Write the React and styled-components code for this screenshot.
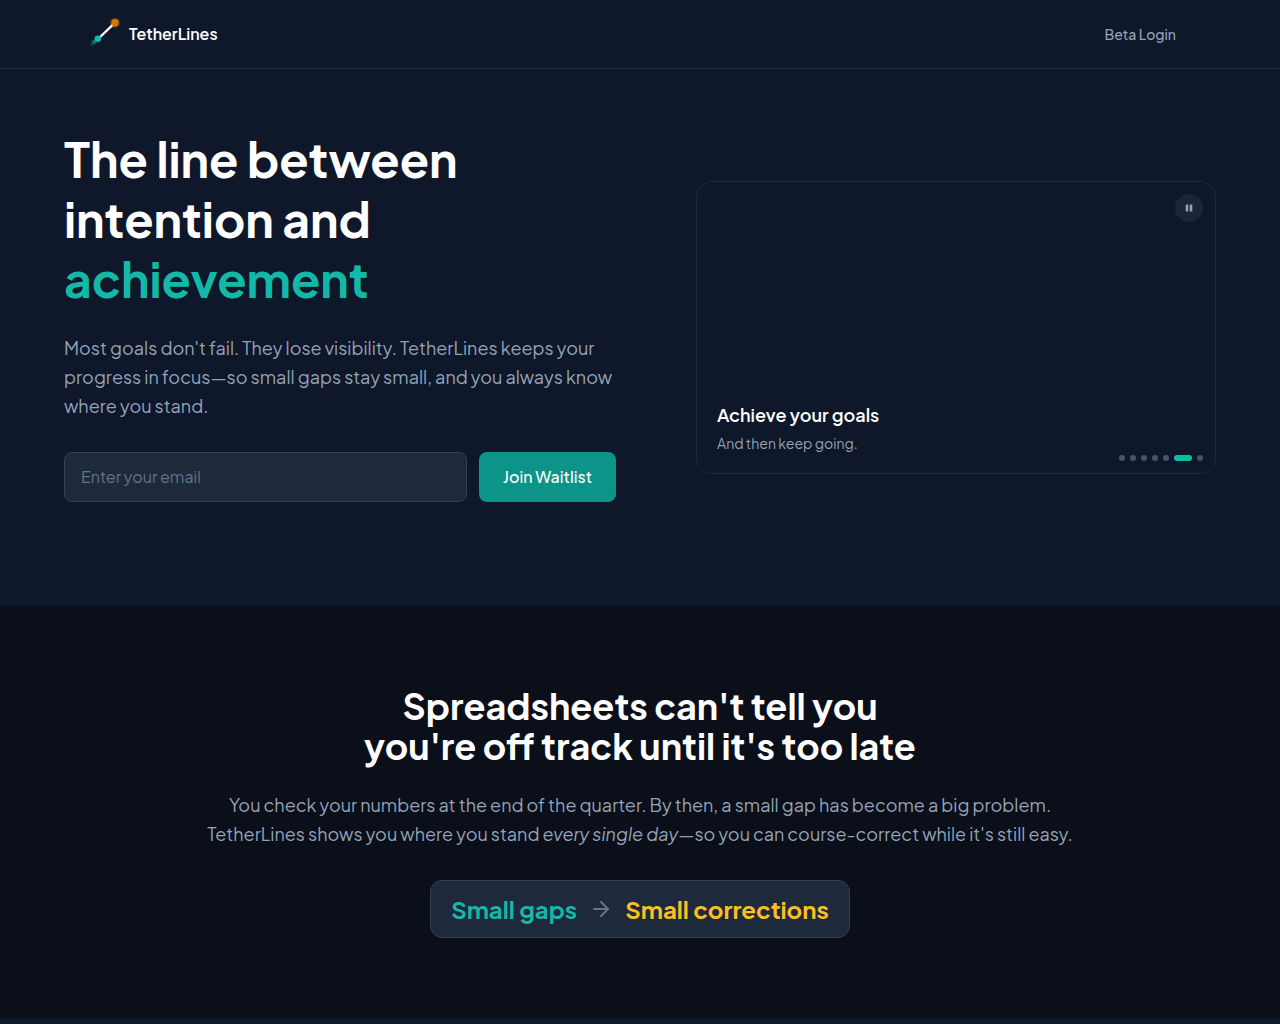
import React from 'react';
import styled, { createGlobalStyle } from 'styled-components';
import { ArrowRight } from 'lucide-react';

const GlobalStyle = createGlobalStyle`
  * {
    box-sizing: border-box;
  }

  body {
    margin: 0;
    background: #0f172a;
    color: #ffffff;
    font-family: 'Plus Jakarta Sans', 'Inter', sans-serif;
    -webkit-font-smoothing: antialiased;
  }

  h1, h2, h3, p {
    margin: 0;
  }

  button, input {
    font-family: inherit;
  }
`;

const Header = styled.header`
  border-bottom: 1px solid #1e293b;
`;

const Nav = styled.nav`
  display: flex;
  align-items: center;
  justify-content: space-between;
  max-width: 1152px;
  margin: 0 auto;
  padding: 16px 24px;
`;

const Brand = styled.a`
  display: flex;
  align-items: center;
  gap: 5px;
  color: #ffffff;
  font-size: 16px;
  font-weight: 600;
  line-height: 24px;
  text-decoration: none;
`;

const LogoMark = styled.svg`
  display: block;
  width: 36px;
  height: 36px;
`;

const LoginLink = styled.a`
  padding: 8px 16px;
  color: #94a3b8;
  font-size: 14px;
  font-weight: 500;
  line-height: 20px;
  text-decoration: none;
`;

const Hero = styled.section`
  display: grid;
  grid-template-columns: 1fr 1fr;
  align-items: center;
  gap: 48px;
  max-width: 1280px;
  margin: 0 auto;
  padding: 60px 64px 80px;
`;

const HeroCopy = styled.div`
  padding-bottom: 24px;
`;

const Title = styled.h1`
  font-size: 48px;
  font-weight: 700;
  line-height: 60px;
`;

const Accent = styled.span`
  color: #14b8a6;
`;

const Lead = styled.p`
  margin-top: 24px;
  color: #94a3b8;
  font-size: 18px;
  line-height: 29px;
`;

const Form = styled.form`
  display: flex;
  gap: 12px;
  margin-top: 32px;
`;

const EmailInput = styled.input`
  flex: 1;
  min-width: 0;
  padding: 12px 16px;
  border: 1px solid #334155;
  border-radius: 8px;
  background: #1e293b;
  color: #ffffff;
  font-size: 16px;
  line-height: 24px;

  &::placeholder {
    color: #64748b;
  }
`;

const JoinButton = styled.button`
  padding: 12px 24px;
  border: 0;
  border-radius: 8px;
  background: #0d9488;
  color: #ffffff;
  font-size: 16px;
  font-weight: 500;
  line-height: 24px;
  cursor: pointer;
`;

const Showcase = styled.div`
  padding-left: 32px;
`;

const Card = styled.div`
  position: relative;
  border: 1px solid #1e293b;
  border-radius: 16px;
`;

const Slide = styled.div`
  display: flex;
  flex-direction: column;
  justify-content: flex-end;
  gap: 4px;
  aspect-ratio: 16 / 9;
  padding: 20px;
`;

const SlideTitle = styled.h3`
  font-size: 18px;
  font-weight: 600;
  line-height: 28px;
`;

const SlideText = styled.p`
  color: #94a3b8;
  font-size: 14px;
  line-height: 20px;
`;

const PauseButton = styled.button`
  position: absolute;
  top: 12px;
  right: 12px;
  display: flex;
  align-items: center;
  justify-content: center;
  width: 28px;
  height: 28px;
  padding: 0;
  border: 0;
  border-radius: 50%;
  background: rgba(30, 41, 59, 0.8);
  color: #94a3b8;
  cursor: pointer;
`;

const Dots = styled.div`
  position: absolute;
  right: 12px;
  bottom: 12px;
  display: flex;
  gap: 5px;
`;

const Dot = styled.button`
  width: ${({ $active }) => ($active ? '18px' : '6px')};
  height: 6px;
  padding: 0;
  border: 0;
  border-radius: 3px;
  background: ${({ $active }) => ($active ? '#14b8a6' : '#475569')};
  cursor: pointer;
`;

const Problem = styled.section`
  padding: 80px 24px;
  background: #0a0f1a;
  text-align: center;
`;

const ProblemTitle = styled.h2`
  font-size: 36px;
  font-weight: 700;
  line-height: 40px;
`;

const ProblemText = styled.p`
  max-width: 896px;
  margin: 24px auto 32px;
  color: #94a3b8;
  font-size: 18px;
  line-height: 29px;
`;

const Callout = styled.div`
  display: inline-flex;
  align-items: center;
  gap: 12px;
  padding: 12px 20px;
  border: 1px solid #334155;
  border-radius: 12px;
  background: #1e293b;
  vertical-align: top;
`;

const CalloutText = styled.span`
  color: ${({ $color }) => $color};
  font-size: 24px;
  font-weight: 700;
  line-height: 32px;
`;

const slides = [
  'Set a goal',
  'Draw the line',
  'Log progress',
  'See the gap',
  'Correct course',
  'Achieve your goals',
  'Start again',
];

const Logo = () => (
  <LogoMark viewBox="0 0 36 36" aria-hidden="true">
    <circle cx="27" cy="6.8" r="5.4" fill="#d97706" opacity="0.25" />
    <line x1="10" y1="23" x2="25" y2="8.6" stroke="#ffffff" strokeWidth="2.2" />
    <circle cx="27" cy="6.8" r="3.7" fill="#d97706" />
    <circle cx="3.6" cy="28.6" r="1.3" fill="#14b8a6" opacity="0.25" />
    <circle cx="6" cy="26.2" r="2.3" fill="#14b8a6" opacity="0.5" />
    <circle cx="9.8" cy="22.8" r="3.3" fill="#14b8a6" />
  </LogoMark>
);

const PauseIcon = () => (
  <svg width="8" height="8" viewBox="0 0 8 8" fill="currentColor" aria-hidden="true">
    <rect x="0.7" y="0.6" width="2.6" height="6.8" rx="0.4" />
    <rect x="4.7" y="0.6" width="2.6" height="6.8" rx="0.4" />
  </svg>
);

const App = () => (
  <>
    <GlobalStyle />
    <Header>
      <Nav>
        <Brand href="#">
          <Logo />
          TetherLines
        </Brand>
        <LoginLink href="#login">Beta Login</LoginLink>
      </Nav>
    </Header>
    <main>
      <Hero>
        <HeroCopy>
          <Title>
            The line between<br />intention and<br /><Accent>achievement</Accent>
          </Title>
          <Lead>
            Most goals don't fail. They lose visibility. TetherLines keeps your
            progress in focus—so small gaps stay small, and you always know
            where you stand.
          </Lead>
          <Form>
            <EmailInput type="email" aria-label="Email" placeholder="Enter your email" />
            <JoinButton type="button">Join Waitlist</JoinButton>
          </Form>
        </HeroCopy>
        <Showcase>
          <Card>
            <Slide>
              <SlideTitle>Achieve your goals</SlideTitle>
              <SlideText>And then keep going.</SlideText>
            </Slide>
            <PauseButton type="button" aria-label="Pause">
              <PauseIcon />
            </PauseButton>
            <Dots>
              {slides.map((name, i) => (
                <Dot key={name} type="button" aria-label={`Slide ${i + 1}`} $active={i === 5} />
              ))}
            </Dots>
          </Card>
        </Showcase>
      </Hero>
      <Problem>
        <ProblemTitle>
          Spreadsheets can't tell you<br />you're off track until it's too late
        </ProblemTitle>
        <ProblemText>
          You check your numbers at the end of the quarter. By then, a small gap
          has become a big problem. TetherLines shows you where you
          stand <em>every single day</em>—so you can course-correct while it's
          still easy.
        </ProblemText>
        <Callout>
          <CalloutText $color="#14b8a6">Small gaps</CalloutText>
          <ArrowRight size={24} color="#64748b" aria-hidden="true" />
          <CalloutText $color="#fbbf24">Small corrections</CalloutText>
        </Callout>
      </Problem>
    </main>
  </>
);

export default App;
